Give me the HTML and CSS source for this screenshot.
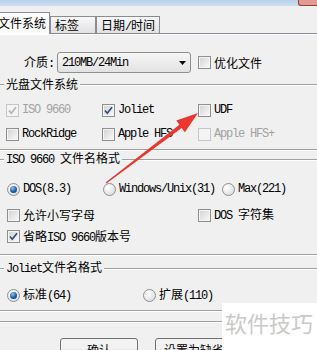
FILE: index.html
```html
<!DOCTYPE html>
<html lang="zh-CN">
<head>
  <meta charset="UTF-8">
  <title>刻录选项</title>
  <link rel="stylesheet" href="styles.css">
</head>
<body>
  <div class="titlebar"><span class="close"></span></div>

  <div class="tabs">
    <div class="tab active">文件系统</div>
    <div class="tab">标签</div>
    <div class="tab">日期<span class="en">/</span>时间</div>
  </div>

  <div class="panel">
    <div class="media-row">
      <span class="media-label">介质<span class="en">:</span></span>
      <div class="select">
        <span class="en">210MB/24Min</span>
        <svg width="7" height="4" viewBox="0 0 7 4"><path d="M0 0h7L3.5 4z" fill="#000"/></svg>
      </div>
      <label class="opt optimize"><span class="cb"></span><span>优化文件</span></label>
    </div>

    <fieldset class="group g1">
      <legend>光盘文件系统</legend>
      <div class="row fs-row">
        <label class="opt off"><span class="cb"><svg viewBox="0 0 11 11"><path d="M2 5.5L4.3 8.2L9 2.3"/></svg></span><span class="en">ISO 9660</span></label>
        <label class="opt"><span class="cb"><svg viewBox="0 0 11 11"><path d="M2 5.5L4.3 8.2L9 2.3"/></svg></span><span class="en">Joliet</span></label>
        <label class="opt"><span class="cb"></span><span class="en">UDF</span></label>
      </div>
      <div class="row fs-row">
        <label class="opt"><span class="cb"></span><span class="en">RockRidge</span></label>
        <label class="opt"><span class="cb"></span><span class="en">Apple HFS</span></label>
        <label class="opt off"><span class="cb"></span><span class="en">Apple HFS+</span></label>
      </div>
    </fieldset>

    <fieldset class="group g2">
      <legend><span class="en">ISO 9660 </span>文件名格式</legend>
      <div class="row iso-radios">
        <label class="opt"><span class="rb on"></span><span class="en">DOS(8.3)</span></label>
        <label class="opt"><span class="rb"></span><span class="en">Windows/Unix(31)</span></label>
        <label class="opt"><span class="rb"></span><span class="en">Max(221)</span></label>
      </div>
      <div class="row iso-checks">
        <label class="opt"><span class="cb"></span><span>允许小写字母</span></label>
        <label class="opt"><span class="cb"></span><span><span class="en">DOS </span>字符集</span></label>
      </div>
      <div class="row iso-last">
        <label class="opt"><span class="cb"><svg viewBox="0 0 11 11"><path d="M2 5.5L4.3 8.2L9 2.3"/></svg></span><span>省略<span class="en">ISO 9660</span>版本号</span></label>
      </div>
    </fieldset>

    <fieldset class="group g3">
      <legend><span class="en">Joliet</span>文件名格式</legend>
      <div class="row joliet-radios">
        <label class="opt"><span class="rb on"></span><span>标准<span class="en">(64)</span></span></label>
        <label class="opt"><span class="rb"></span><span>扩展<span class="en">(110)</span></span></label>
      </div>
    </fieldset>
  </div>

  <div class="buttons">
    <button>确认</button>
    <button>设置为缺省</button>
  </div>

  <div class="watermark">软件技巧</div>

  <svg class="arrow" width="317" height="350" viewBox="0 0 317 350">
    <polygon points="105.6,182.5 179.3,124.7 176.3,120.4 198,113 184.9,132.2 181.7,127.9 106.4,183.5" fill="#e8382f"/>
  </svg>
</body>
</html>
```

FILE: styles.css
```css
body {
  margin: 0;
  width: 317px;
  height: 350px;
  overflow: hidden;
  position: relative;
  background: #f0f0f0;
  font-family: "Noto Sans CJK SC", sans-serif;
  font-size: 12px;
  line-height: 14px;
  color: #000;
}
.en {
  font-family: "Liberation Mono", "Noto Sans CJK SC", monospace;
  letter-spacing: -1.2px;
}

/* window frame */
.titlebar {
  height: 6px;
  background: linear-gradient(#b9d1ec, #cddff2);
  display: flex;
  justify-content: flex-end;
}
.close {
  width: 19px;
  height: 6px;
  box-sizing: border-box;
  background: #e39a94;
  border: 1px solid #a53a31;
  border-top: none;
  border-right: none;
  border-radius: 0 0 0 3px;
}

/* tabs */
.tabs {
  height: 27px;
  display: flex;
  align-items: flex-end;
  border-bottom: 1px solid #898c95;
}
.tab {
  height: 17px;
  min-width: 46px;
  box-sizing: border-box;
  padding: 1px 4px 0;
  border: 1px solid #898c95;
  border-bottom: none;
  background: linear-gradient(#f8f8f8, #e1e1e1);
}
.tab.active {
  height: 22px;
  margin-left: -4px;
  margin-bottom: -1px;
  padding: 3px 3px 0 1px;
  background: #fcfcfc;
}

/* body of the tab */
.panel {
  border-top: 1px solid #fff;
  border-bottom: 1px solid #a0a0a0;
  box-shadow: 0 1px #fff;
  padding: 17px 0 10px;
}
.media-row {
  display: flex;
  align-items: center;
  height: 21px;
}
.media-label {
  margin-left: 24px;
  width: 33px;
}
.select {
  width: 134px;
  height: 21px;
  box-sizing: border-box;
  border: 1px solid #8e8f8f;
  border-radius: 3px;
  background: linear-gradient(#f6f6f6, #e3e3e3);
  display: flex;
  align-items: center;
  justify-content: space-between;
  padding: 0 4px 0 4px;
}
.optimize {
  margin-left: 7px;
}

/* check boxes and radios */
.opt {
  display: flex;
  align-items: center;
  gap: 3px;
  white-space: nowrap;
}
.cb {
  flex: none;
  width: 13px;
  height: 13px;
  box-sizing: border-box;
  border: 1px solid #8e8f8f;
  background: linear-gradient(135deg, #d2d2d2, #fafafa);
  box-shadow: inset 0 0 0 1px #f4f4f4;
}
.cb svg {
  display: block;
  width: 11px;
  height: 11px;
}
.cb path {
  fill: none;
  stroke: #34488a;
  stroke-width: 1.7;
}
.off {
  color: #a2a2a2;
}
.off .cb {
  border-color: #c6c6c6;
  background: #f4f4f4;
}
.off .cb path {
  stroke: #b3b3b3;
}
.rb {
  flex: none;
  width: 13px;
  height: 13px;
  box-sizing: border-box;
  border: 1px solid #8e8f8f;
  border-radius: 50%;
  background: radial-gradient(circle at 35% 30%, #fff, #d5d5d5);
}
.rb.on::after {
  content: "";
  display: block;
  width: 7px;
  height: 7px;
  margin: 2px;
  border-radius: 50%;
  background: radial-gradient(circle at 38% 32%, #8cc8f2, #1d5aa5 55%, #0d3773);
}

/* group boxes */
.group {
  margin: 0;
  padding: 0;
  min-width: 0;
  border: none;
  border-top: 1px solid #a0a0a0;
  border-bottom: 1px solid #a0a0a0;
  box-shadow: inset 0 1px #fff, 0 1px #fff;
}
.group legend {
  margin-left: 4px;
  padding: 0 2px;
  line-height: 14px;
  background: #f0f0f0;
}
.row {
  display: grid;
  align-items: center;
}
.g1 {
  margin-top: 4px;
  padding: 7px 0 3px;
}
.fs-row {
  height: 24px;
  padding-left: 6px;
  grid-template-columns: 96px 96px 1fr;
}
.g2 {
  margin-top: 1px;
  padding: 9px 0 9px;
}
.iso-radios {
  height: 26px;
  padding-left: 7px;
  grid-template-columns: 96px 119px 1fr;
}
.iso-checks {
  height: 26px;
  padding-left: 7px;
  grid-template-columns: 191px 1fr;
}
.iso-last {
  height: 17px;
  padding-left: 7px;
}
.g3 {
  margin-top: 5px;
  padding: 7px 0 3px;
}
.joliet-radios {
  height: 24px;
  padding-left: 7px;
  grid-template-columns: 136px 1fr;
}

/* dialog buttons */
.buttons {
  display: flex;
  gap: 17px;
  padding-left: 60px;
  margin-top: 16px;
}
button {
  width: 78px;
  height: 23px;
  padding: 0;
  border: 1px solid #707070;
  border-radius: 3px;
  background: linear-gradient(#f3f3f3 45%, #dddddd 55%, #d0d0d0);
  font: inherit;
  color: #000;
}

/* overlays */
.watermark {
  position: absolute;
  left: 222px;
  top: 303px;
  right: 0;
  bottom: 0;
  background: #fff;
  padding: 7px 0 0 3px;
  font-size: 22px;
  line-height: 24px;
  color: #c9c9c9;
}
.arrow {
  position: absolute;
  left: 0;
  top: 0;
  pointer-events: none;
}
```
